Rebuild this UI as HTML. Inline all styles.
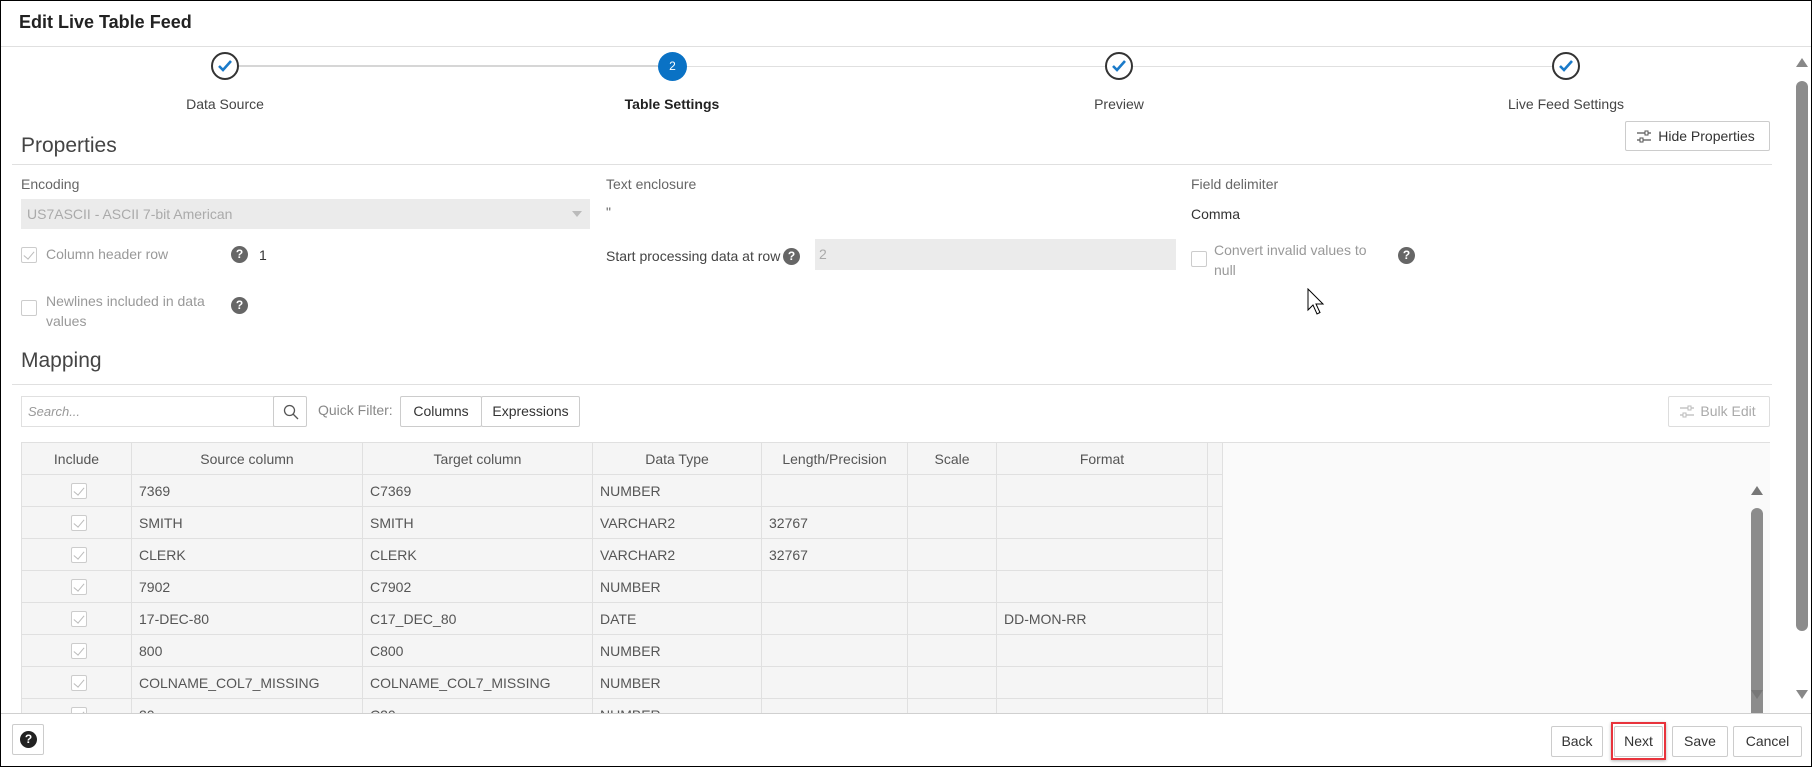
<!DOCTYPE html>
<html><head><meta charset="utf-8"><style>
*{box-sizing:border-box;margin:0;padding:0}
body{width:1812px;height:767px;overflow:hidden;background:#fff;font-family:"Liberation Sans",sans-serif;color:#333;font-size:14px;position:relative}
.a{position:absolute;white-space:nowrap}
.frame{position:absolute;left:0;top:0;width:1812px;height:767px;border:1px solid #000}
.hr{position:absolute;height:1px;background:#e0e0e0}
.btn{position:absolute;border:1px solid #ccc;border-radius:2px;background:#fff;font-size:14px;color:#333;text-align:center}
.help{position:absolute;width:17px;height:17px;border-radius:50%;background:#666;color:#fff;font-weight:bold;font-size:12px;text-align:center;line-height:17px}
.cb{position:absolute;width:16px;height:16px;border:1px solid #ccc;border-radius:2px;background:#fff}
.cb.k::after{content:"";position:absolute;left:4px;top:1px;width:5px;height:9px;border:solid #bbb;border-width:0 1.5px 1.5px 0;transform:rotate(40deg)}
.lbl{color:#666;font-size:14px}
.dis{color:#999;font-size:14px}
table{position:absolute;left:21px;top:442px;border-collapse:collapse;background:#f5f5f5;font-size:14px;color:#555}
td,th{border:1px solid #e0e0e0;height:32px;padding:0 7px;font-weight:normal;text-align:left}
th{text-align:center;height:32px}
.step{position:absolute;width:28px;height:28px;border-radius:50%;border:2px solid #333;background:#fff}
.step svg{position:absolute;left:4px;top:5px}
</style></head><body>
<div class="frame"></div>
<div class="a" style="left:19px;top:12px;font-size:18px;color:#222;font-weight:600">Edit Live Table Feed</div>
<div class="hr" style="left:1px;top:46px;width:1810px"></div>

<div class="hr" style="left:239px;top:65px;width:419px;height:2px;background:#d6d6d6"></div>
<div class="hr" style="left:686px;top:66px;width:419px;height:1px;background:#e0e0e0"></div>
<div class="hr" style="left:1133px;top:66px;width:419px;height:1px;background:#e0e0e0"></div>
<div class="step" style="left:211px;top:52px"><svg width="16" height="14"><path d="M2 7 L6 11 L14 2" stroke="#1a7ac9" stroke-width="2.6" fill="none"/></svg></div>
<div class="a" style="left:658px;top:52px;width:29px;height:29px;border-radius:50%;background:#0a72c5;color:#fff;font-size:12px;text-align:center;line-height:29px">2</div>
<div class="step" style="left:1105px;top:52px"><svg width="16" height="14"><path d="M2 7 L6 11 L14 2" stroke="#1a7ac9" stroke-width="2.6" fill="none"/></svg></div>
<div class="step" style="left:1552px;top:52px"><svg width="16" height="14"><path d="M2 7 L6 11 L14 2" stroke="#1a7ac9" stroke-width="2.6" fill="none"/></svg></div>
<div class="a" style="left:125px;top:96px;width:200px;text-align:center;color:#444">Data Source</div>
<div class="a" style="left:572px;top:96px;width:200px;text-align:center;color:#222;font-weight:600">Table Settings</div>
<div class="a" style="left:1019px;top:96px;width:200px;text-align:center;color:#444">Preview</div>
<div class="a" style="left:1466px;top:96px;width:200px;text-align:center;color:#444">Live Feed Settings</div>

<div class="a" style="left:1796px;top:58px;width:0;height:0;border-left:6px solid transparent;border-right:6px solid transparent;border-bottom:9px solid #888"></div>
<div class="a" style="left:1796px;top:81px;width:12px;height:550px;background:#8c8c8c;border-radius:6px"></div>
<div class="a" style="left:1796px;top:690px;width:0;height:0;border-left:6px solid transparent;border-right:6px solid transparent;border-top:9px solid #888"></div>

<div class="a" style="left:21px;top:134px;font-size:21px;color:#444;font-weight:300">Properties</div>
<div class="hr" style="left:12px;top:164px;width:1760px"></div>
<div class="btn" style="left:1625px;top:121px;width:145px;height:30px;line-height:28px;padding-left:18px">
<svg style="position:absolute;left:10px;top:8px" width="16" height="13"><path d="M1 3H15M1 10H15" stroke="#555" stroke-width="1.2"/><rect x="9" y="1" width="3" height="4" fill="#fff" stroke="#555"/><rect x="4" y="8" width="3" height="4" fill="#fff" stroke="#555"/></svg>Hide Properties</div>

<div class="a lbl" style="left:21px;top:176px">Encoding</div>
<div class="a" style="left:21px;top:199px;width:569px;height:30px;background:#ebebeb;color:#aaa;line-height:30px;padding-left:6px">US7ASCII - ASCII 7-bit American</div>
<div class="a" style="left:572px;top:211px;width:0;height:0;border-left:5px solid transparent;border-right:5px solid transparent;border-top:6px solid #bbb"></div>
<div class="cb k" style="left:21px;top:247px"></div>
<div class="a dis" style="left:46px;top:246px">Column header row</div>
<div class="help" style="left:231px;top:246px">?</div>
<div class="a" style="left:259px;top:247px">1</div>
<div class="cb" style="left:21px;top:300px"></div>
<div class="a dis" style="left:46px;top:291px;line-height:20px">Newlines included in data<br>values</div>
<div class="help" style="left:231px;top:297px">?</div>

<div class="a lbl" style="left:606px;top:176px">Text enclosure</div>
<div class="a" style="left:606px;top:204px;color:#666">"</div>
<div class="a" style="left:606px;top:248px;color:#444">Start processing data at row</div>
<div class="help" style="left:783px;top:248px">?</div>
<div class="a" style="left:815px;top:239px;width:361px;height:31px;background:#ebebeb;color:#aaa;line-height:31px;padding-left:4px">2</div>

<div class="a lbl" style="left:1191px;top:176px">Field delimiter</div>
<div class="a" style="left:1191px;top:206px">Comma</div>
<div class="cb" style="left:1191px;top:251px"></div>
<div class="a dis" style="left:1214px;top:240px;line-height:20px">Convert invalid values to<br>null</div>
<div class="help" style="left:1398px;top:247px">?</div>
<svg class="a" style="left:1307px;top:288px" width="20" height="28"><path d="M1 1 L1 22 L6 17 L10 26 L13 24.5 L9 16 L16 16 Z" fill="#fff" stroke="#000" stroke-width="1"/></svg>

<div class="a" style="left:21px;top:349px;font-size:21px;color:#444;font-weight:300">Mapping</div>
<div class="hr" style="left:12px;top:384px;width:1760px"></div>
<div class="a" style="left:21px;top:396px;width:253px;height:31px;border:1px solid #e0e0e0;font-style:italic;color:#999;font-size:13px;line-height:29px;padding-left:6px">Search...</div>
<div class="btn" style="left:273px;top:396px;width:34px;height:31px"><svg style="position:absolute;left:9px;top:7px" width="16" height="16"><circle cx="6.5" cy="6.5" r="5" stroke="#555" stroke-width="1.3" fill="none"/><path d="M10 10 L15 15" stroke="#555" stroke-width="1.3"/></svg></div>
<div class="a" style="left:318px;top:402px;color:#888;font-size:14px">Quick Filter:</div>
<div class="btn" style="left:400px;top:396px;width:82px;height:31px;line-height:29px">Columns</div>
<div class="btn" style="left:481px;top:396px;width:99px;height:31px;line-height:29px">Expressions</div>
<div class="btn" style="left:1668px;top:396px;width:102px;height:31px;line-height:29px;color:#aaa;padding-left:18px;border-color:#ddd"><svg style="position:absolute;left:10px;top:8px" width="16" height="13"><path d="M1 3H15M1 10H15" stroke="#bbb" stroke-width="1.2"/><rect x="9" y="1" width="3" height="4" fill="#fff" stroke="#bbb"/><rect x="4" y="8" width="3" height="4" fill="#fff" stroke="#bbb"/></svg>Bulk Edit</div>

<div class="a" style="left:21px;top:442px;width:1749px;height:271px;background:#fafafa;border-top:1px solid #e0e0e0"></div>
<table>
<tr><th style="width:110px">Include</th><th style="width:231px">Source column</th><th style="width:230px">Target column</th><th style="width:169px">Data Type</th><th style="width:146px">Length/Precision</th><th style="width:89px">Scale</th><th style="width:211px">Format</th><th style="width:14px;border-right:1px solid #e0e0e0"></th></tr>
<tr><td><div class="cb k" style="position:relative;margin-left:42px"></div></td><td>7369</td><td>C7369</td><td>NUMBER</td><td></td><td></td><td></td><td></td></tr>
<tr><td><div class="cb k" style="position:relative;margin-left:42px"></div></td><td>SMITH</td><td>SMITH</td><td>VARCHAR2</td><td>32767</td><td></td><td></td><td></td></tr>
<tr><td><div class="cb k" style="position:relative;margin-left:42px"></div></td><td>CLERK</td><td>CLERK</td><td>VARCHAR2</td><td>32767</td><td></td><td></td><td></td></tr>
<tr><td><div class="cb k" style="position:relative;margin-left:42px"></div></td><td>7902</td><td>C7902</td><td>NUMBER</td><td></td><td></td><td></td><td></td></tr>
<tr><td><div class="cb k" style="position:relative;margin-left:42px"></div></td><td>17-DEC-80</td><td>C17_DEC_80</td><td>DATE</td><td></td><td></td><td>DD-MON-RR</td><td></td></tr>
<tr><td><div class="cb k" style="position:relative;margin-left:42px"></div></td><td>800</td><td>C800</td><td>NUMBER</td><td></td><td></td><td></td><td></td></tr>
<tr><td><div class="cb k" style="position:relative;margin-left:42px"></div></td><td>COLNAME_COL7_MISSING</td><td>COLNAME_COL7_MISSING</td><td>NUMBER</td><td></td><td></td><td></td><td></td></tr>
<tr><td><div class="cb k" style="position:relative;margin-left:42px"></div></td><td>20</td><td>C20</td><td>NUMBER</td><td></td><td></td><td></td><td></td></tr>
</table>
<div class="a" style="left:1751px;top:486px;width:0;height:0;border-left:6px solid transparent;border-right:6px solid transparent;border-bottom:9px solid #777"></div>
<div class="a" style="left:1751px;top:508px;width:12px;height:230px;background:#8c8c8c;border-radius:6px"></div>
<div class="a" style="left:1751px;top:690px;width:0;height:0;border-left:6px solid transparent;border-right:6px solid transparent;border-top:9px solid #777"></div>

<div class="a" style="left:1px;top:713px;width:1810px;height:53px;background:#fff;border-top:1px solid #d0d0d0"></div>
<div class="btn" style="left:12px;top:724px;width:32px;height:31px"><div class="help" style="left:7px;top:6px;background:#222">?</div></div>
<div class="btn" style="left:1551px;top:726px;width:52px;height:31px;line-height:29px">Back</div>
<div class="a" style="left:1611px;top:722px;width:55px;height:38px;border:2px solid #e8333c;box-shadow:0 1px 3px rgba(0,0,0,.3)"></div>
<div class="btn" style="left:1614px;top:726px;width:49px;height:31px;line-height:29px">Next</div>
<div class="btn" style="left:1672px;top:726px;width:56px;height:31px;line-height:29px">Save</div>
<div class="btn" style="left:1733px;top:726px;width:69px;height:31px;line-height:29px">Cancel</div>
</body></html>
